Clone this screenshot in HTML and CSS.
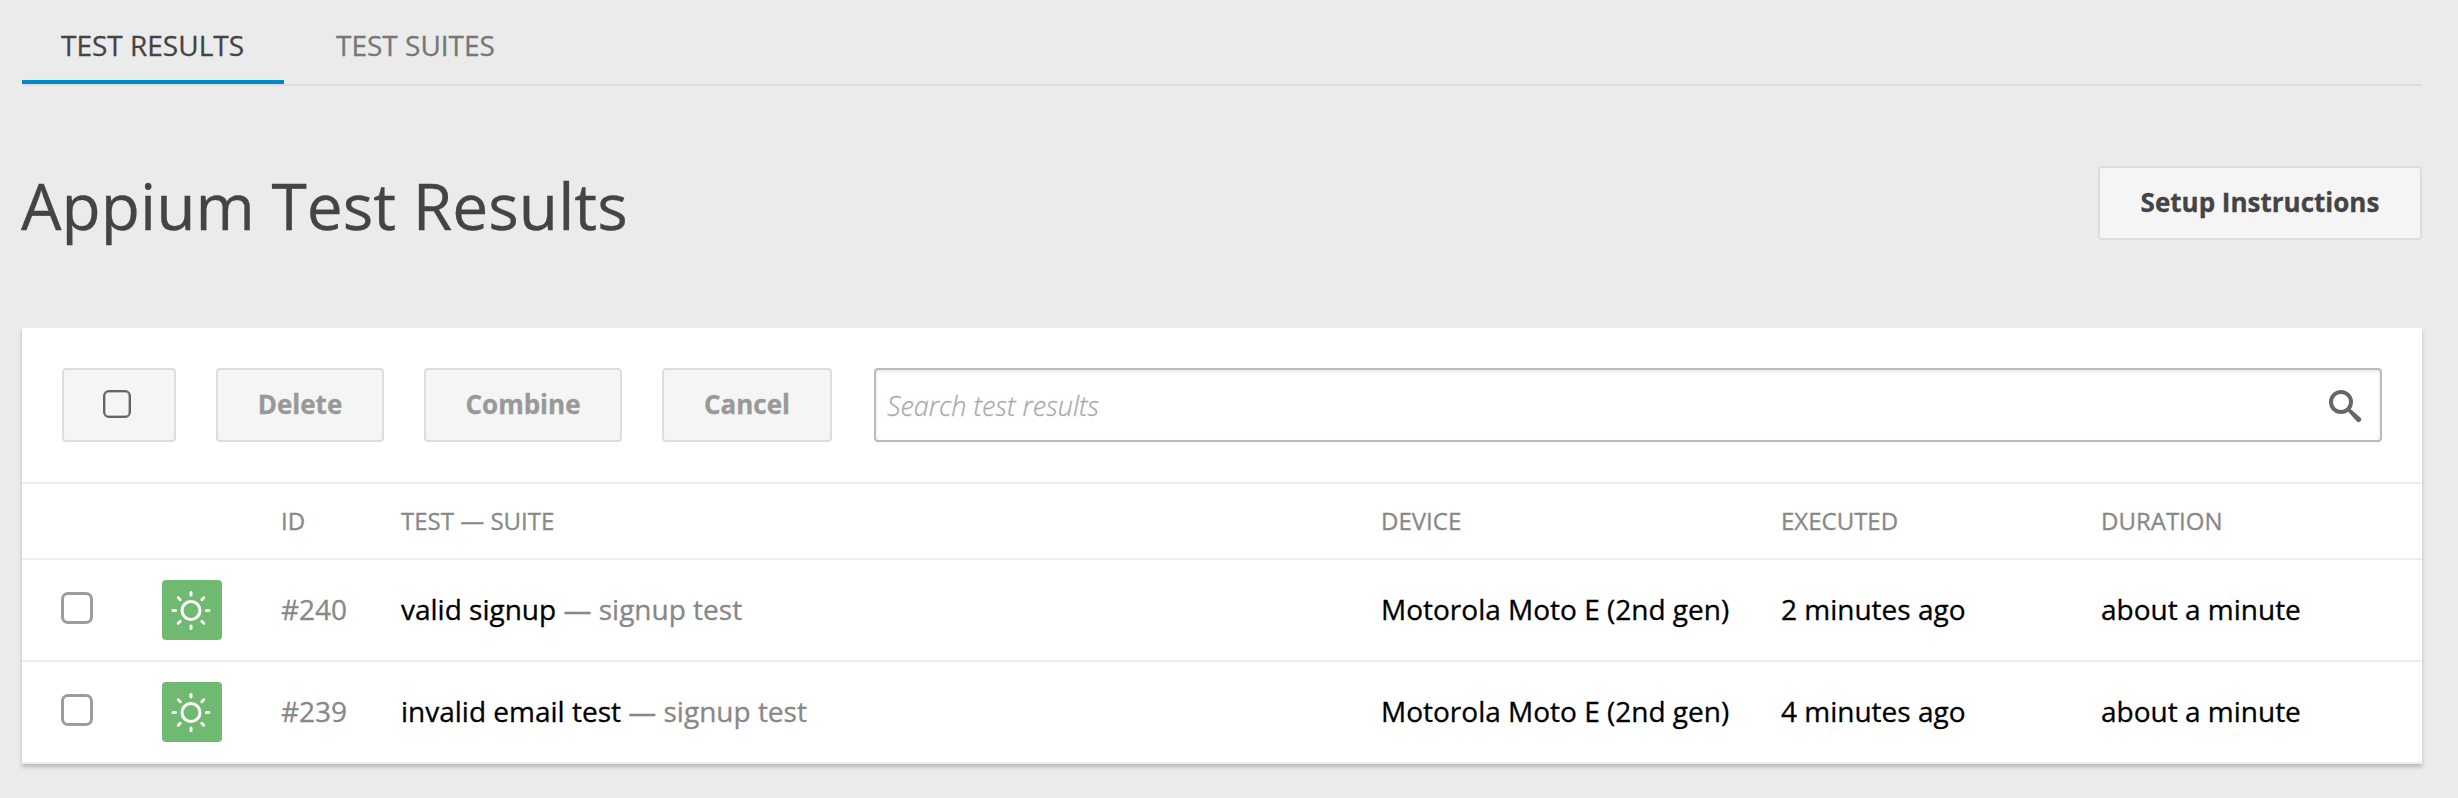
FILE: index.html
```html
<!DOCTYPE html>
<html lang="en">
<head>
<meta charset="utf-8">
<title>Appium Test Results</title>
<link rel="stylesheet" href="styles.css">
</head>
<body>
<svg class="sprite" aria-hidden="true">
  <symbol id="sun" viewBox="0 0 60 60">
    <g fill="none" stroke="#fff" stroke-width="3" stroke-linecap="round">
      <circle cx="29" cy="30.5" r="9"/>
      <path d="M29 12.5v2.6M29 45.9v2.6M11 30.5h2.6M44.4 30.5h2.6"/>
      <path d="M16.3 17.8l1.9 1.9M39.8 41.3l1.9 1.9M41.7 17.8l-1.9 1.9M18.2 41.3l-1.9 1.9"/>
    </g>
  </symbol>
</svg>
<nav class="tabs">
  <a class="tab tab-active">TEST RESULTS</a>
  <a class="tab">TEST SUITES</a>
</nav>
<header class="page-head">
  <h1 class="title">Appium Test Results</h1>
  <button class="btn btn-setup">Setup Instructions</button>
</header>
<main class="card">
  <div class="toolbar">
    <button class="btn btn-select" aria-label="Select all"><span class="box box-small"></span></button>
    <button class="btn btn-muted btn-delete">Delete</button>
    <button class="btn btn-muted btn-combine">Combine</button>
    <button class="btn btn-muted btn-cancel">Cancel</button>
    <div class="search">
      <span class="placeholder">Search test results</span>
      <svg class="search-icon" viewBox="0 0 34 36" width="34" height="36">
        <circle cx="13" cy="15" r="10" fill="none" stroke="#666" stroke-width="4"/>
        <path d="M22.6 22L32.3 30.4A2.4 2.4 0 0 1 28.9 34.4L20 24.6z" fill="#666"/>
      </svg>
    </div>
  </div>
  <div class="row row-head">
    <span></span><span></span><span>ID</span><span>TEST — SUITE</span><span>DEVICE</span><span>EXECUTED</span><span>DURATION</span>
  </div>
  <div class="row row-item">
    <span class="box"></span>
    <span class="status"><svg width="60" height="60"><use href="#sun"/></svg></span>
    <span class="cell dim">#240</span>
    <span class="cell">valid signup <span class="dim">— signup test</span></span>
    <span class="cell">Motorola Moto E (2nd gen)</span>
    <span class="cell">2 minutes ago</span>
    <span class="cell">about a minute</span>
  </div>
  <div class="row row-item">
    <span class="box"></span>
    <span class="status"><svg width="60" height="60"><use href="#sun"/></svg></span>
    <span class="cell dim">#239</span>
    <span class="cell">invalid email test <span class="dim">— signup test</span></span>
    <span class="cell">Motorola Moto E (2nd gen)</span>
    <span class="cell">4 minutes ago</span>
    <span class="cell">about a minute</span>
  </div>
</main>
</body>
</html>
```
FILE: styles.css
```css
* { box-sizing: border-box; }

body {
  margin: 0;
  padding: 0 36px 0 22px;
  height: 798px;
  overflow: hidden;
  background: #ebebeb;
  color: #000;
  font: 28px "Open Sans", sans-serif;
  -webkit-text-stroke: .3px;
}

.sprite { display: none; }

.tabs {
  display: flex;
  gap: 12px;
  height: 86px;
  border-bottom: 2px solid #ddd;
}
.tab {
  height: 84px;
  padding: 10px 40px 0;
  border-bottom: 4px solid transparent;
  line-height: 70px;
  white-space: nowrap;
  color: #777;
}
.tab-active {
  width: 262px;
  padding-left: 39px;
  border-bottom-color: #08c;
  color: #444;
}

.page-head {
  display: flex;
  justify-content: space-between;
  align-items: flex-start;
  height: 242px;
  padding-top: 80px;
}
.title {
  margin: 0 0 0 -1px;
  font-size: 64.1px;
  font-weight: 400;
  line-height: 78px;
  color: #444;
}

.btn {
  flex: none;
  height: 74px;
  padding: 0 0 2px;
  border: 2px solid #ddd;
  border-radius: 4px;
  background: #f5f5f5;
  color: #444;
  font: 700 26px/68px "Open Sans", sans-serif;
}
.btn-setup { width: 324px; }
.btn-muted { color: #999; }
.btn-select {
  display: flex;
  justify-content: center;
  align-items: center;
  width: 114px;
  margin-right: 40px;
}
.btn-delete { width: 168px; margin-right: 40px; }
.btn-combine { width: 198px; margin-right: 40px; }
.btn-cancel { width: 170px; margin-right: 42px; }

.card {
  height: 436px;
  background: #fff;
  box-shadow: 0 3px 4px rgba(0, 0, 0, .22);
}
.toolbar {
  display: flex;
  height: 156px;
  padding: 40px 40px 0;
  border-bottom: 2px solid #eee;
}
.search {
  display: flex;
  flex: 1;
  justify-content: space-between;
  align-items: center;
  height: 74px;
  padding: 0 18px 0 11px;
  border: 2px solid #bbb;
  border-radius: 4px;
  box-shadow: inset 0 2px 4px rgba(0, 0, 0, .09);
}
.placeholder {
  font-size: 27px;
  font-style: italic;
  font-weight: 300;
  color: #aaa;
}

.row {
  display: grid;
  grid-template-columns: 101px 119px 120px 980px 400px 320px 1fr;
  align-items: center;
  padding-left: 39px;
  border-bottom: 2px solid #eee;
  white-space: nowrap;
}
.row-head {
  height: 76px;
  padding-bottom: 2px;
  font-size: 24px;
  color: #888;
}
.row-item { height: 102px; }
.cell { padding-bottom: 2px; }
.dim { color: #888; }

.box {
  width: 32px;
  height: 32px;
  margin-bottom: 4px;
  border: 3px solid #9c9c9c;
  border-radius: 7px;
}
.box-small {
  width: 28px;
  height: 28px;
  margin: 0 0 1px -4px;
  border: 2px solid #666;
  border-radius: 6px;
  box-shadow: inset 0 0 0 .5px #888;
}
.status {
  width: 60px;
  height: 60px;
  border-radius: 4px;
  background: #70b970;
}
.status svg { display: block; }
```
